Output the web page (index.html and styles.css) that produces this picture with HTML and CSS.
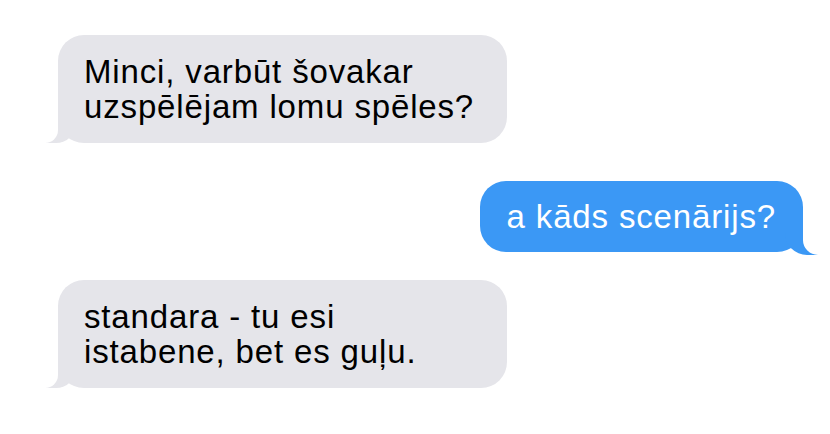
FILE: index.html
```html
<!DOCTYPE html>
<html lang="lv">
<head>
    <meta charset="UTF-8">
    <meta name="viewport" content="width=device-width, initial-scale=1.0">
    <title>Sarakste</title>
    <link rel="stylesheet" href="styles.css">
</head>
<body>
    <div class="chat">
        <div class="row row-in first">
            <div class="bubble bubble-in">Minci, varbūt šovakar<br>uzspēlējam lomu spēles?</div>
        </div>
        <div class="row row-out">
            <div class="bubble bubble-out">a kāds scenārijs?</div>
        </div>
        <div class="row row-in last">
            <div class="bubble bubble-in">standara - tu esi<br>istabene, bet es guļu.</div>
        </div>
    </div>
</body>
</html>
```

FILE: styles.css
```css
body {
    margin: 0;
    background-color: #ffffff;
    font-family: "Liberation Sans", Arial, sans-serif;
}
.chat {
    width: 830px;
    height: 434px;
    padding: 35px 27px 0 58px;
    box-sizing: border-box;
    display: flex;
    flex-direction: column;
}
.row {
    display: flex;
}
.row-out {
    justify-content: flex-end;
    margin-top: 38px;
}
.row-in.last {
    margin-top: 28px;
}
.bubble {
    position: relative;
    font-size: 33px;
    line-height: 35px;
    letter-spacing: 0.85px;
    border-radius: 26px;
}
.bubble-in {
    width: 449px;
    box-sizing: border-box;
    padding: 19px 25px 19px 26px;
    background-color: #e5e5ea;
    color: #000000;
}
.bubble-out {
    padding: 18px 27px 18px 27px;
    background-color: #3b98f5;
    color: #ffffff;
}
/* tails */
.bubble-in::before {
    content: "";
    position: absolute;
    bottom: 0;
    left: -12px;
    width: 30px;
    height: 30px;
    background-color: #e5e5ea;
    border-bottom-right-radius: 20px;
}
.bubble-in::after {
    content: "";
    position: absolute;
    bottom: 0;
    left: -17px;
    width: 17px;
    height: 30px;
    background-color: #ffffff;
    border-bottom-right-radius: 13px;
}
.bubble-out::before {
    content: "";
    position: absolute;
    bottom: -3px;
    right: -16px;
    width: 34px;
    height: 32px;
    background-color: #3b98f5;
    border-bottom-left-radius: 22px;
}
.bubble-out::after {
    content: "";
    position: absolute;
    bottom: -3px;
    right: -30px;
    width: 30px;
    height: 32px;
    background-color: #ffffff;
    border-bottom-left-radius: 15px;
}
```
